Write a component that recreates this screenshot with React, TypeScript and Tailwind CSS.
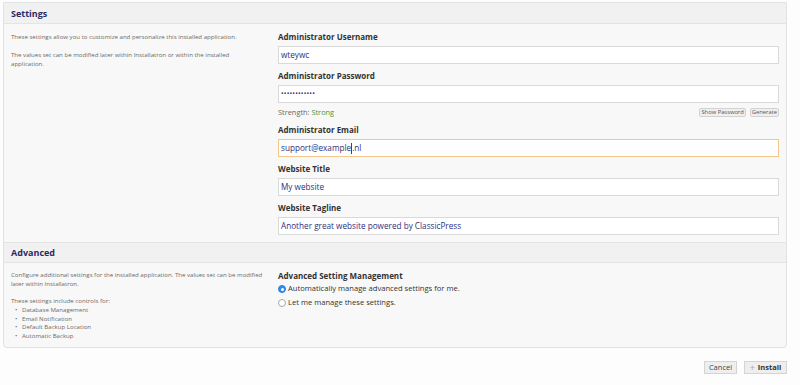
import React from "react";

function SectionHeader({ title, top }: { title: string; top?: boolean }) {
  return (
    <div
      className={
        "h-[21px] bg-[#f1f1f1] border-b border-[#e4e4e4] flex items-center pl-[7px] " +
        (top ? "border-t" : "")
      }
    >
      <span className="text-[9px] font-bold text-[#2b2b63] leading-none">{title}</span>
    </div>
  );
}

function Field({
  label,
  children,
  focus,
  mb = true,
}: {
  label: string;
  children: React.ReactNode;
  focus?: boolean;
  mb?: boolean;
}) {
  return (
    <div className={mb ? "mb-[6px]" : ""}>
      <div className="h-[12px] leading-[12px] text-[8px] font-bold text-[#333]">{label}</div>
      <div
        className={
          "mt-[3px] h-[18px] bg-white border flex items-center pl-[2px] text-[8.2px] text-[#30307a] " +
          (focus ? "border-[#f2c98a]" : "border-[#d9d9d9]")
        }
      >
        {children}
      </div>
    </div>
  );
}

export default function App() {
  return (
    <div className="w-[800px] h-[385px] bg-[#fdfdfd] font-['Open_Sans',sans-serif] pt-[2px] pl-[3px]">
      <div className="w-[784px] border border-[#e2e2e2] rounded-b-[4px] bg-[#f8f8f8] overflow-hidden">
        <SectionHeader title="Settings" />
        <div className="flex">
          <div className="w-[274px] shrink-0 pl-[7px] pr-[8px] pt-[8px] text-[6.1px] leading-[9px] text-[#6a6a6a]">
            <p>These settings allow you to customize and personalize this installed application.</p>
            <p className="mt-[9px] w-[236px]">
              The values set can be modified later within Installatron or within the installed application.
            </p>
          </div>
          <div className="flex-1 pr-[7px] pt-[7px] pb-[7px]">
            <Field label="Administrator Username">wteywc</Field>
            <Field label="Administrator Password" mb={false}>
              <span className="text-[7px] tracking-[0.2px] text-[#30307a]">••••••••••••</span>
            </Field>
            <div className="h-[21px] flex items-start justify-between">
              <div className="pt-[4px] text-[7.4px] leading-[10px] text-[#6a6a6a]">
                Strength: <span className="text-[#3d9a3d]">Strong</span>
              </div>
              <div className="pt-[5px] flex gap-[4px]">
                <span className="h-[9px] px-[1px] flex items-center bg-[#efefef] border border-[#d2d2d2] rounded-[2px] text-[5.8px] text-[#555] leading-none">
                  Show Password
                </span>
                <span className="h-[9px] px-[1px] flex items-center bg-[#efefef] border border-[#d2d2d2] rounded-[2px] text-[5.8px] text-[#555] leading-none">
                  Generate
                </span>
              </div>
            </div>
            <Field label="Administrator Email" focus>
              <span>support@example</span>
              <span className="inline-block w-px h-[11px] bg-[#3a3a9a]"></span>
              <span>.nl</span>
            </Field>
            <Field label="Website Title">My website</Field>
            <Field label="Website Tagline" mb={false}>
              Another great website powered by ClassicPress
            </Field>
          </div>
        </div>
        <SectionHeader title="Advanced" top />
        <div className="flex h-[84px]">
          <div className="w-[274px] shrink-0 pl-[7px] pr-[6px] pt-[8px] text-[6.1px] leading-[8.7px] text-[#6a6a6a]">
            <p>
              Configure additional settings for the installed application. The values set can be modified later within
              Installatron.
            </p>
            <p className="mt-[8.7px]">These settings include controls for:</p>
            <div className="pl-[4px]">
              {["Database Management", "Email Notification", "Default Backup Location", "Automatic Backup"].map((t) => (
                <div key={t} className="flex">
                  <span className="w-[7px]">•</span>
                  <span>{t}</span>
                </div>
              ))}
            </div>
          </div>
          <div className="flex-1 pt-[7px]">
            <div className="h-[12px] leading-[12px] text-[8px] font-bold text-[#333]">Advanced Setting Management</div>
            <div className="h-[14px] flex items-center gap-[2px] text-[7.6px] text-[#333]">
              <span className="w-[8px] h-[8px] rounded-full bg-[#2f8cf0] border border-[#2a7fe0] flex items-center justify-center">
                <span className="w-[3px] h-[3px] rounded-full bg-white"></span>
              </span>
              <span>Automatically manage advanced settings for me.</span>
            </div>
            <div className="h-[14px] flex items-center gap-[2px] text-[7.6px] text-[#333]">
              <span className="w-[8px] h-[8px] rounded-full bg-white border border-[#a8a8a8]"></span>
              <span>Let me manage these settings.</span>
            </div>
          </div>
        </div>
      </div>
      <div className="flex justify-end gap-[7px] pr-[13px] mt-[13px]">
        <span className="h-[13px] w-[33px] flex items-center justify-center bg-[#eeeeee] border border-[#d4d4d4] text-[7.5px] text-[#444] leading-none">
          Cancel
        </span>
        <span className="h-[13px] w-[43px] flex items-center justify-center gap-[3px] bg-[#eeeeee] border border-[#d4d4d4] text-[7.5px] font-bold text-[#333] leading-none">
          <span className="text-[#aaa] font-normal text-[9px]">+</span>
          Install
        </span>
      </div>
    </div>
  );
}
